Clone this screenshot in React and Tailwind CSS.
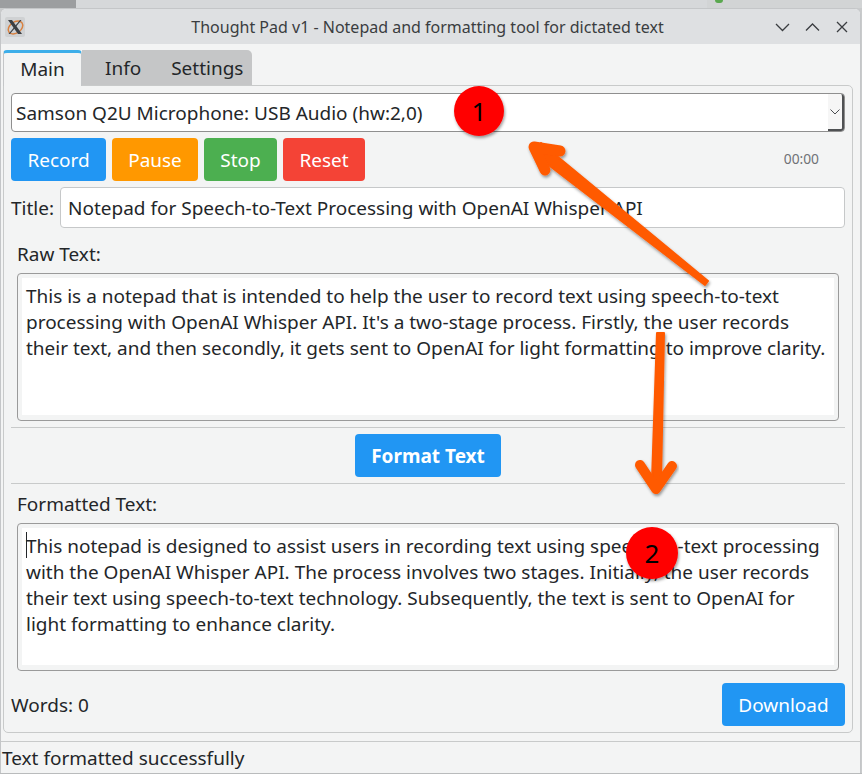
import React from "react";

function Btn({ c, w, children, bold }) {
  return (
    <div className={`h-[43px] pt-[2px] ${w} ${c} rounded-[4px] flex items-center justify-center text-white shrink-0 ${bold ? "font-bold" : ""}`}>
      {children}
    </div>
  );
}

function Area({ lines, caret }) {
  return (
    <div className="mx-[6px] h-[148px] border border-[#9a9a9a] rounded-[4px] bg-[#f3f4f4] pt-[4px] px-[4px] pb-[5px]">
      <div className="relative h-full bg-white pl-[4px] pt-[5px] leading-[26px] text-[#232629] whitespace-pre">
        {caret && <div className="absolute left-[4px] top-[4px] w-px h-[26px] bg-[#232629]" />}
        {lines.map((l) => (
          <div key={l}>{l}</div>
        ))}
      </div>
    </div>
  );
}

export default function App() {
  return (
    <div className="relative w-[862px] h-[774px] overflow-hidden bg-[#c9cbcc] text-[18.99px] text-[#232629] font-['Noto_Sans',sans-serif] flex flex-col">
      <div className="h-[8px] shrink-0 flex">
        <div className="w-[76px] bg-[#9c9ea0]" />
        <div className="flex-1 bg-[#d6d8da]" />
        <div className="w-[155px] bg-[#d2d4d5] flex items-start pl-[8px]">
          <div className="w-[8px] h-[3px] rounded-b-full bg-[#5aa84f]" />
        </div>
      </div>
      <div className="flex-1 mr-px rounded-t-[6px] border border-[#c4c6c8] border-b-0 bg-[#f3f4f4] flex flex-col overflow-hidden">
        <div className="h-[35px] shrink-0 bg-[#dee0e2] flex items-center pl-[3px] pr-[10px]">
          <svg width="20" height="20" viewBox="0 0 20 20" className="shrink-0 ml-px">
            <rect width="20" height="20" rx="2" fill="#cfd1d3" />
            <ellipse cx="10.5" cy="10.5" rx="8" ry="5.5" fill="none" stroke="#d9813f" strokeWidth="1.5" transform="rotate(-35 10.5 10.5)" />
            <path d="M3 3 L7 3 L17 17 L13 17 Z" fill="#3b3f44" />
            <path d="M15 3 L16.5 3 L5 17 L3.5 17 Z" fill="#3b3f44" />
          </svg>
          <div className="flex-1 text-center text-[16px] text-[#3a3d40] pl-[56px]">Thought Pad v1 - Notepad and formatting tool for dictated text</div>
          <svg width="76" height="16" viewBox="0 0 76 16" fill="none" stroke="#3a3d40" strokeWidth="1.3" className="shrink-0">
            <path d="M2 5 L8.5 11.5 L15 5" />
            <path d="M32 11.5 L38.5 5 L45 11.5" />
            <path d="M63 3 L73 13 M73 3 L63 13" />
          </svg>
        </div>
        <div className="h-[35px] mt-[6px] shrink-0 flex pl-[2px]">
          <div className="w-[79px] h-[36px] z-10 rounded-t-[4px] border-t-[3px] border-x border-t-[#3daee9] border-x-[#c4c6c8] bg-[#f3f4f4] flex items-center justify-center">Main</div>
          <div className="w-[170px] pt-[2px] bg-[#c5c6c7] rounded-tr-[5px] flex items-center">
            <span className="ml-[23px]">Info</span>
            <span className="ml-[30px]">Settings</span>
          </div>
        </div>
        <div className="ml-[2px] mr-[7px] h-[648px] shrink-0 border border-[#c8caca] rounded-b-[5px] rounded-tr-[5px] pt-[7px] px-[7px] flex flex-col">
          <div className="h-[39px] pt-[2px] shrink-0 relative border border-[#8f8f8f] rounded-[4px] bg-white flex items-center pl-[4px]">
            Samson Q2U Microphone: USB Audio (hw:2,0)
            <div className="absolute right-0 top-0 bottom-0 w-[16px] bg-[#f6f6f6] border-r-2 border-b-2 border-[#4f5153] rounded-r-[3px] flex items-center justify-center">
              <svg width="12" height="8" viewBox="0 0 12 8" fill="none" stroke="#4b4e51" strokeWidth="1"><path d="M1.5 1.5 L6 6 L10.5 1.5" /></svg>
            </div>
          </div>
          <div className="mt-[6px] flex gap-[6px] items-center pr-[26px]">
            <Btn c="bg-[#2196f3]" w="w-[95px]">Record</Btn>
            <Btn c="bg-[#ff9800]" w="w-[86px]">Pause</Btn>
            <Btn c="bg-[#4caf50]" w="w-[73px]">Stop</Btn>
            <Btn c="bg-[#f44336]" w="w-[82px]">Reset</Btn>
            <div className="ml-auto text-[13.8px] text-[#6f7276]">00:00</div>
          </div>
          <div className="mt-[6px] h-[41px] flex items-center justify-between">
            <span className="pt-[2px]">Title:</span>
            <div className="w-[785px] h-[41px] pt-[2px] border border-[#c6c8c9] rounded-[4px] bg-white flex items-center pl-[7px]">Notepad for Speech-to-Text Processing with OpenAI Whisper API</div>
          </div>
          <div className="mt-[13px] h-[26px] pl-[6px] leading-[26px]">Raw Text:</div>
          <div className="mt-[6px]">
            <Area lines={[
              "This is a notepad that is intended to help the user to record text using speech-to-text",
              "processing with OpenAI Whisper API. It's a two-stage process. Firstly, the user records",
              "their text, and then secondly, it gets sent to OpenAI for light formatting to improve clarity.",
            ]} />
          </div>
          <div className="mt-[6px] border-t border-b border-[#c8caca] h-[57px] flex items-center justify-center">
            <Btn c="bg-[#2196f3]" w="w-[146px]" bold>Format Text</Btn>
          </div>
          <div className="mt-[7px] h-[26px] pl-[6px] leading-[26px]">Formatted Text:</div>
          <div className="mt-[6px]">
            <Area caret lines={[
              "This notepad is designed to assist users in recording text using speech-to-text processing",
              "with the OpenAI Whisper API. The process involves two stages. Initially, the user records",
              "their text using speech-to-text technology. Subsequently, the text is sent to OpenAI for",
              "light formatting to enhance clarity.",
            ]} />
          </div>
          <div className="mt-[12px] flex items-center justify-between">
            <span className="pt-[2px]">Words: 0</span>
            <Btn c="bg-[#2196f3]" w="w-[123px]">Download</Btn>
          </div>
        </div>
        <div className="mt-[8px] flex-1 border-t border-[#c8caca] pl-[1px] pt-[2px] flex items-center">Text formatted successfully</div>
      </div>
      <div className="h-px shrink-0 bg-[#b9bbbc]" />

      <svg className="absolute left-0 top-0" width="862" height="774" viewBox="0 0 862 774" fill="none">
        <defs>
          <filter id="s" x="-20%" y="-20%" width="140%" height="140%">
            <feDropShadow dx="1" dy="2" stdDeviation="1.5" floodColor="#000" floodOpacity="0.4" />
          </filter>
        </defs>
        <g stroke="#ff5a00" strokeLinecap="round" strokeLinejoin="round" filter="url(#s)">
          <polygon points="541,143 533,153 705,285 708,281" fill="#ff5a00" strokeWidth="2" />
          <path d="M534 147 L560 151 M534 147 L545 170" strokeWidth="11" />
        </g>
        <g stroke="#ff5a00" strokeLinecap="round" strokeLinejoin="round" filter="url(#s)">
          <polygon points="657,333 664,333 661,480 652,480" fill="#ff5a00" strokeWidth="2" />
          <path d="M640 465 L656 489 L672 466" strokeWidth="10" />
        </g>
        <circle cx="479" cy="111" r="25" fill="#ff0000" filter="url(#s)" />
        <circle cx="652" cy="553" r="26" fill="#ff0000" filter="url(#s)" />
      </svg>
      <div className="absolute left-[454px] top-[86px] w-[50px] h-[50px] flex items-center justify-center text-[26px] text-black">1</div>
      <div className="absolute left-[626px] top-[527px] w-[52px] h-[52px] flex items-center justify-center text-[26px] text-black">2</div>
    </div>
  );
}
